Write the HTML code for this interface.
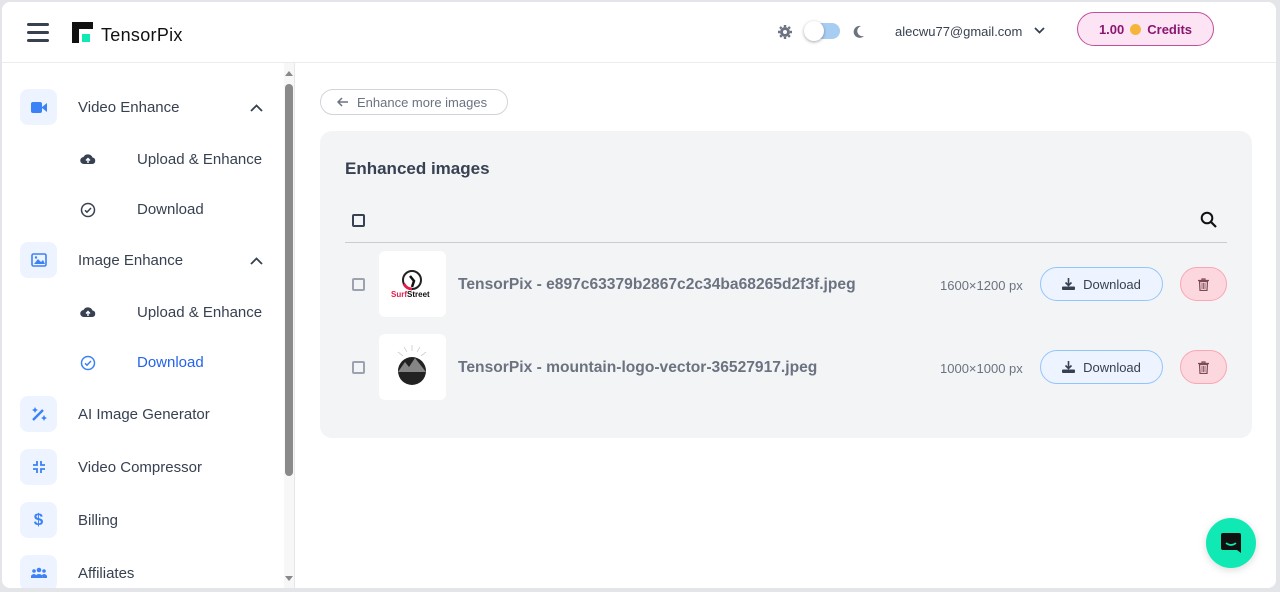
<!DOCTYPE html>
<html><head><meta charset="utf-8"><style>
*{box-sizing:border-box;margin:0;padding:0}
body{width:1280px;height:592px;overflow:hidden;background:#e4e5e8;font-family:"Liberation Sans",sans-serif;color:#374151}
.frame{position:absolute;left:2px;top:2px;width:1274px;height:586px;background:#fff;border-radius:8px;overflow:hidden}
.hdr{position:absolute;left:0;top:0;width:1274px;height:61px;border-bottom:1px solid #ececef}
.side{position:absolute;left:0;top:61px;width:293px;height:530px;border-right:1px solid #e5e7eb}
.abs{position:absolute}
.ib{position:absolute;left:18px;width:37px;height:36px;border-radius:8px;background:#eef4ff;display:flex;align-items:center;justify-content:center}
.t{position:absolute;font-size:15px;color:#374151;white-space:nowrap}
.card{position:absolute;left:318px;top:129px;width:932px;height:307px;background:#f3f4f6;border-radius:12px}
.cb{position:absolute;width:13px;height:13px;border:2px solid #9ca3af;border-radius:2px}
.thumb{position:absolute;left:377px;width:67px;height:66px;background:#fff;border-radius:6px}
.fn{position:absolute;left:456px;font-size:15.6px;font-weight:bold;color:#6b7280;white-space:nowrap}
.px{position:absolute;left:938px;font-size:13px;color:#6b7280}
.dl{position:absolute;left:1038px;width:123px;height:34px;border:1px solid #93c5fd;border-radius:17px;background:#eef4ff;font-size:13px;color:#374151;display:flex;align-items:center;justify-content:center;gap:8px}
.del{position:absolute;left:1178px;width:47px;height:34px;border:1px solid #fca5b5;border-radius:17px;background:#fdd7de;display:flex;align-items:center;justify-content:center}
</style></head><body><div class="frame">
<div class="hdr">
 <div class="abs" style="left:25px;top:21px;width:22px;height:3px;background:#374151;border-radius:2px"></div>
 <div class="abs" style="left:25px;top:29px;width:22px;height:3px;background:#374151;border-radius:2px"></div>
 <div class="abs" style="left:25px;top:37px;width:22px;height:3px;background:#374151;border-radius:2px"></div>
 <svg class="abs" style="left:70px;top:20px" width="22" height="22"><path d="M0 0H21V7H7V21H0Z" fill="#111"/><rect x="10" y="12" width="8" height="8" fill="#10e9b4"/></svg>
 <div class="abs" style="left:99px;top:23px;font-size:18px;color:#111;letter-spacing:.3px">TensorPix</div>
 <svg class="abs" style="left:776px;top:23px" width="14" height="14" viewBox="0 0 14 14"><circle cx="7" cy="7" r="5" fill="#6b7280"/><circle cx="7" cy="7" r="2" fill="#fff"/><g stroke="#6b7280" stroke-width="2.4"><path d="M7 0V14M0 7H14M2 2L12 12M12 2L2 12" stroke-dasharray="2 10 2"/></g></svg>
 <div class="abs" style="left:804px;top:21px;width:34px;height:16px;border-radius:8px;background:#a8cdf3"></div>
 <div class="abs" style="left:802px;top:19px;width:20px;height:20px;border-radius:50%;background:#fff;box-shadow:0 1px 3px rgba(0,0,0,.35)"></div>
 <svg class="abs" style="left:851px;top:23px" width="12" height="13"><path d="M8 1A6 6 0 1 0 11 11A5 5 0 0 1 8 1Z" fill="#6b7280"/></svg>
 <div class="abs" style="left:893px;top:22px;font-size:13px;color:#374151">alecwu77@gmail.com</div>
 <svg class="abs" style="left:1032px;top:25px" width="11" height="8"><path d="M1 1L5.5 5.5L10 1" stroke="#374151" stroke-width="1.8" fill="none"/></svg>
 <div class="abs" style="left:1075px;top:10px;width:137px;height:34px;border:1px solid #c0509a;border-radius:17px;background:#fde4f4;font-size:13px;font-weight:bold;color:#8b1670;display:flex;align-items:center;justify-content:center;gap:6px">1.00 <span style="display:inline-block;width:11px;height:11px;border-radius:50%;background:#f5b53b"></span> Credits</div>
</div>
<div class="side">
 <div class="ib" style="top:26px"><svg width="16" height="11"><rect x="0" y="0" width="11" height="11" rx="2" fill="#3b82f6"/><path d="M11 5L16 1V10L11 6Z" fill="#3b82f6"/></svg></div>
 <div class="t" style="left:76px;top:36px">Video Enhance</div>
 <svg class="abs" style="left:248px;top:41px" width="13" height="8"><path d="M1 7L6.5 1.5L12 7" stroke="#374151" stroke-width="1.8" fill="none"/></svg>
 <svg class="abs" style="left:78px;top:90px" width="16" height="12"><path d="M4 11A3.5 3.5 0 0 1 3.5 4A5 5 0 0 1 12.5 4.5A3.3 3.3 0 0 1 12.5 11Z" fill="#374151"/><path d="M8 10V5.5M6 7.5L8 5.5L10 7.5" stroke="#fff" stroke-width="1.4" fill="none"/></svg>
 <div class="t" style="left:135px;top:88px">Upload &amp; Enhance</div>
 <svg class="abs" style="left:78px;top:139px" width="16" height="16"><circle cx="8" cy="8" r="6.5" stroke="#374151" stroke-width="1.5" fill="none"/><path d="M5 8.3L7 10.2L11 6" stroke="#374151" stroke-width="1.5" fill="none"/></svg>
 <div class="t" style="left:135px;top:138px">Download</div>
 <div class="ib" style="top:179px"><svg width="16" height="14"><rect x="1" y="1" width="14" height="12" rx="1.5" stroke="#3b82f6" stroke-width="1.6" fill="none"/><path d="M3 11L7 6L10 9L12 7L14 11Z" fill="#3b82f6"/><circle cx="5" cy="4.5" r="1.2" fill="#3b82f6"/></svg></div>
 <div class="t" style="left:76px;top:189px">Image Enhance</div>
 <svg class="abs" style="left:248px;top:194px" width="13" height="8"><path d="M1 7L6.5 1.5L12 7" stroke="#374151" stroke-width="1.8" fill="none"/></svg>
 <svg class="abs" style="left:78px;top:243px" width="16" height="12"><path d="M4 11A3.5 3.5 0 0 1 3.5 4A5 5 0 0 1 12.5 4.5A3.3 3.3 0 0 1 12.5 11Z" fill="#374151"/><path d="M8 10V5.5M6 7.5L8 5.5L10 7.5" stroke="#fff" stroke-width="1.4" fill="none"/></svg>
 <div class="t" style="left:135px;top:241px">Upload &amp; Enhance</div>
 <svg class="abs" style="left:78px;top:292px" width="16" height="16"><circle cx="8" cy="8" r="6.5" stroke="#3b82f6" stroke-width="1.5" fill="none"/><path d="M5 8.3L7 10.2L11 6" stroke="#3b82f6" stroke-width="1.5" fill="none"/></svg>
 <div class="t" style="left:135px;top:291px;color:#2563eb">Download</div>
 <div class="ib" style="top:333px"><svg width="16" height="16"><path d="M2 14L12 4" stroke="#3b82f6" stroke-width="2.4"/><path d="M4 1L5 3L7 4L5 5L4 7L3 5L1 4L3 3ZM13 9L14 11L16 12L14 13L13 15L12 13L10 12L12 11Z" fill="#3b82f6"/></svg></div>
 <div class="t" style="left:76px;top:343px">AI Image Generator</div>
 <div class="ib" style="top:386px"><svg width="14" height="14"><path d="M1 5H5V1M9 1V5H13M13 9H9V13M5 13V9H1" stroke="#3b82f6" stroke-width="1.8" fill="none"/></svg></div>
 <div class="t" style="left:76px;top:396px">Video Compressor</div>
 <div class="ib" style="top:439px;font-size:17px;font-weight:bold;color:#3b82f6">$</div>
 <div class="t" style="left:76px;top:449px">Billing</div>
 <div class="ib" style="top:492px"><svg width="16" height="12"><circle cx="8" cy="3" r="2.3" fill="#3b82f6"/><circle cx="3" cy="4" r="1.8" fill="#3b82f6"/><circle cx="13" cy="4" r="1.8" fill="#3b82f6"/><path d="M4 11A4 4 0 0 1 12 11Z M0 11A3 3 0 0 1 5 8L4 11Z M16 11A3 3 0 0 0 11 8L12 11Z" fill="#3b82f6"/></svg></div>
 <div class="t" style="left:76px;top:502px">Affiliates</div>
 <div class="abs" style="left:282px;top:0;width:10px;height:530px;background:#f7f7f7"></div>
 <svg class="abs" style="left:282px;top:7px" width="10" height="7"><path d="M1 6L5 1L9 6Z" fill="#888"/></svg>
 <svg class="abs" style="left:282px;top:512px" width="10" height="7"><path d="M1 1L5 6L9 1Z" fill="#888"/></svg>
 <div class="abs" style="left:283px;top:21px;width:8px;height:392px;background:#8a8a8a;border-radius:4px"></div>
</div>
<div class="abs" style="left:318px;top:87px;width:188px;height:26px;border:1px solid #d1d5db;border-radius:13px;font-size:13px;color:#6b7280;display:flex;align-items:center;padding-left:16px;gap:8px"><svg width="12" height="10"><path d="M11 5H1.5M5 1L1 5L5 9" stroke="#6b7280" stroke-width="1.5" fill="none"/></svg>Enhance more images</div>
<div class="card"></div>
<div class="abs" style="left:343px;top:157px;font-size:17px;font-weight:bold;color:#374151">Enhanced images</div>
<div class="cb" style="left:350px;top:212px;border-color:#374151"></div>
<svg class="abs" style="left:1198px;top:209px" width="18" height="18"><circle cx="7" cy="7" r="5.3" stroke="#111" stroke-width="2" fill="none"/><path d="M11 11L16 16" stroke="#111" stroke-width="2.2"/></svg>
<div class="abs" style="left:343px;top:240px;width:882px;height:1px;background:#c9ccd1"></div>
<div class="cb" style="left:350px;top:276px"></div>
<div class="thumb" style="top:249px"><svg width="67" height="66"><circle cx="33" cy="29" r="9" stroke="#222" stroke-width="2" fill="none"/><path d="M25 33A9 9 0 0 0 33 38" stroke="#e11d48" stroke-width="3" fill="none"/><path d="M31 25L35 30L33 36" stroke="#111" stroke-width="2.5" fill="none"/><text x="12" y="46" font-size="8" font-weight="bold" fill="#e11d48" font-family="Liberation Sans">Surf<tspan fill="#111">Street</tspan></text></svg></div>
<div class="fn" style="top:274px">TensorPix - e897c63379b2867c2c34ba68265d2f3f.jpeg</div>
<div class="px" style="top:276px">1600×1200 px</div>
<div class="dl" style="top:265px"><svg width="13" height="12"><path d="M6.5 0V7M3.5 4.5L6.5 7.5L9.5 4.5" stroke="#374151" stroke-width="1.6" fill="none"/><rect x="0" y="8.5" width="13" height="3.5" rx="1" fill="#374151"/></svg>Download</div>
<div class="del" style="top:265px"><svg width="11" height="13"><path d="M0 2.5H11M4 2.5V1H7V2.5M1.5 3.5H9.5L9 12.5H2Z" stroke="#7a4a55" stroke-width="1.2" fill="none"/><path d="M4 5V11M5.5 5V11M7 5V11" stroke="#7a4a55" stroke-width=".8"/></svg></div>
<div class="cb" style="left:350px;top:359px"></div>
<div class="thumb" style="top:332px"><svg width="67" height="66"><circle cx="33" cy="37" r="14" fill="#222"/><path d="M19 38L26 28L30 33L36 24L47 38Z" fill="#fff" opacity=".45"/><g stroke="#bbb" stroke-width=".6"><path d="M33 11V17M25 13L28 18M41 13L38 18M19 18L24 22M47 18L42 22"/></g></svg></div>
<div class="fn" style="top:357px">TensorPix - mountain-logo-vector-36527917.jpeg</div>
<div class="px" style="top:359px">1000×1000 px</div>
<div class="dl" style="top:348px"><svg width="13" height="12"><path d="M6.5 0V7M3.5 4.5L6.5 7.5L9.5 4.5" stroke="#374151" stroke-width="1.6" fill="none"/><rect x="0" y="8.5" width="13" height="3.5" rx="1" fill="#374151"/></svg>Download</div>
<div class="del" style="top:348px"><svg width="11" height="13"><path d="M0 2.5H11M4 2.5V1H7V2.5M1.5 3.5H9.5L9 12.5H2Z" stroke="#7a4a55" stroke-width="1.2" fill="none"/><path d="M4 5V11M5.5 5V11M7 5V11" stroke="#7a4a55" stroke-width=".8"/></svg></div>
<div class="abs" style="left:1204px;top:516px;width:50px;height:50px;border-radius:50%;background:#10e9b4;box-shadow:0 2px 8px rgba(0,0,0,.15);display:flex;align-items:center;justify-content:center"><svg width="22" height="22"><path d="M3 1H19A2 2 0 0 1 21 3V21L17 18H3A2 2 0 0 1 1 16V3A2 2 0 0 1 3 1Z" fill="#111"/><path d="M6 11Q11 15 16 11" stroke="#10e9b4" stroke-width="1.6" fill="none"/></svg></div>
</div></body></html>
